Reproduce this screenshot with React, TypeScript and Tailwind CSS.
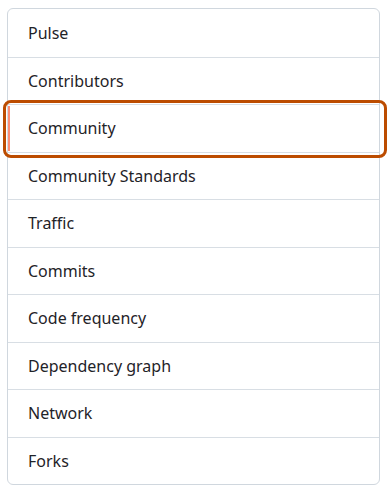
import React from "react";

const items = [
  "Pulse",
  "Contributors",
  "Community",
  "Community Standards",
  "Traffic",
  "Commits",
  "Code frequency",
  "Dependency graph",
  "Network",
  "Forks",
];

export default function App() {
  return (
    <div
      className="w-[388px] h-[490px] bg-white pt-[8px] pl-[7px]"
      style={{ fontFamily: '"Noto Sans", "Open Sans", sans-serif' }}
    >
      <div className="w-[373px] border border-[#d0d7de] rounded-[6px] bg-white">
        {items.map((label, i) => (
          <div
            key={label}
            className={`relative h-[47.5px] flex items-center pl-[20px] text-[16px] text-[#1f2328] ${
              i > 0 ? "border-t border-[#d8dee4]" : ""
            }`}
          >
            {label === "Community" && (
              <>
                <div className="absolute left-0 top-[1px] bottom-[1px] w-[2px] bg-[#fd8c73]" />
                <div className="absolute left-[-5px] right-[-8px] top-[-5px] bottom-[-6px] border-[3px] border-[#bc4c00] rounded-[8px]" />
              </>
            )}
            <span className="leading-6">{label}</span>
          </div>
        ))}
      </div>
    </div>
  );
}
